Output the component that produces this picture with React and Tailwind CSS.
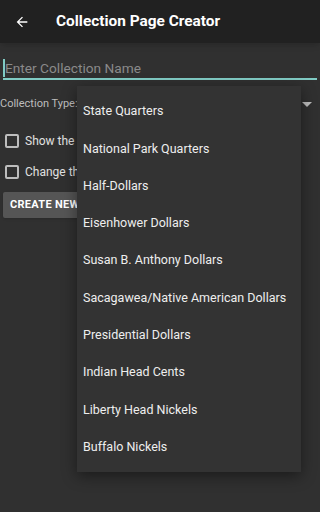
import React from 'react'

const coins = [
    "State Quarters",
    "National Park Quarters",
    "Half-Dollars",
    "Eisenhower Dollars",
    "Susan B. Anthony Dollars",
    "Sacagawea/Native American Dollars",
    "Presidential Dollars",
    "Indian Head Cents",
    "Liberty Head Nickels",
    "Buffalo Nickels",
];

const Checkbox = ({ label }) => (
    <div className="flex items-center h-[31px]">
        <div className="shrink-0 ml-[5px] w-[14px] h-[14px] border-2 border-[#bdbdbd] rounded-[2px]"></div>
        <span className="ml-[6px] text-[12px] text-[#e0e0e0] whitespace-nowrap">{label}</span>
    </div>
);

export default function App() {
    return (
        <div className="relative w-[320px] h-[512px] bg-[#303030] overflow-hidden font-['Roboto',sans-serif]">
            <header className="h-[43px] bg-[#212121] flex items-center shadow-md">
                <svg className="ml-[14px] w-[16px] h-[16px]" viewBox="0 0 24 24" fill="white">
                    <path d="M20 11H7.83l5.59-5.59L12 4l-8 8 8 8 1.41-1.41L7.83 13H20v-2z" />
                </svg>
                <h1 className="ml-[26px] text-white text-[15.4px] font-bold">Collection Page Creator</h1>
            </header>

            <div className="pt-[15px] px-[3px]">
                <div className="relative h-[22px] border-b-2 border-[#80cbc4] flex items-center">
                    <div className="w-[2px] h-[18px] bg-[#80cbc4]"></div>
                    <span className="text-[13.7px] text-[#8a8a8a]">Enter Collection Name</span>
                </div>
            </div>

            <div className="mt-[15px] flex items-center justify-between h-[18px]">
                <span className="text-[11px] text-[#bdbdbd]">Collection Type:</span>
                <div className="mr-[8px] w-0 h-0 border-l-[5px] border-r-[5px] border-t-[5px] border-l-transparent border-r-transparent border-t-[#bdbdbd]"></div>
            </div>

            <div className="mt-[12px]">
                <Checkbox label="Show the metal composition" />
                <Checkbox label="Change the display order" />
            </div>

            <button className="mt-[5px] ml-[3px] h-[26px] px-[7px] bg-[#555555] rounded-[2px] shadow text-white text-[11px] font-bold tracking-[0.3px] whitespace-nowrap">
                CREATE NEW COLLECTION
            </button>

            {/* open spinner menu, lies over the form */}
            <div className="absolute left-[77px] top-[86px] w-[224px] pt-[7px] pb-[6px] bg-[#333333] shadow-[0_4px_14px_rgba(0,0,0,0.45)]">
                {coins.map((c, i) => (
                    <div key={i} className="h-[37.3px] flex items-center px-[6px] text-[12.5px] text-[#eeeeee] whitespace-nowrap">
                        {c}
                    </div>
                ))}
            </div>
        </div>
    );
}
